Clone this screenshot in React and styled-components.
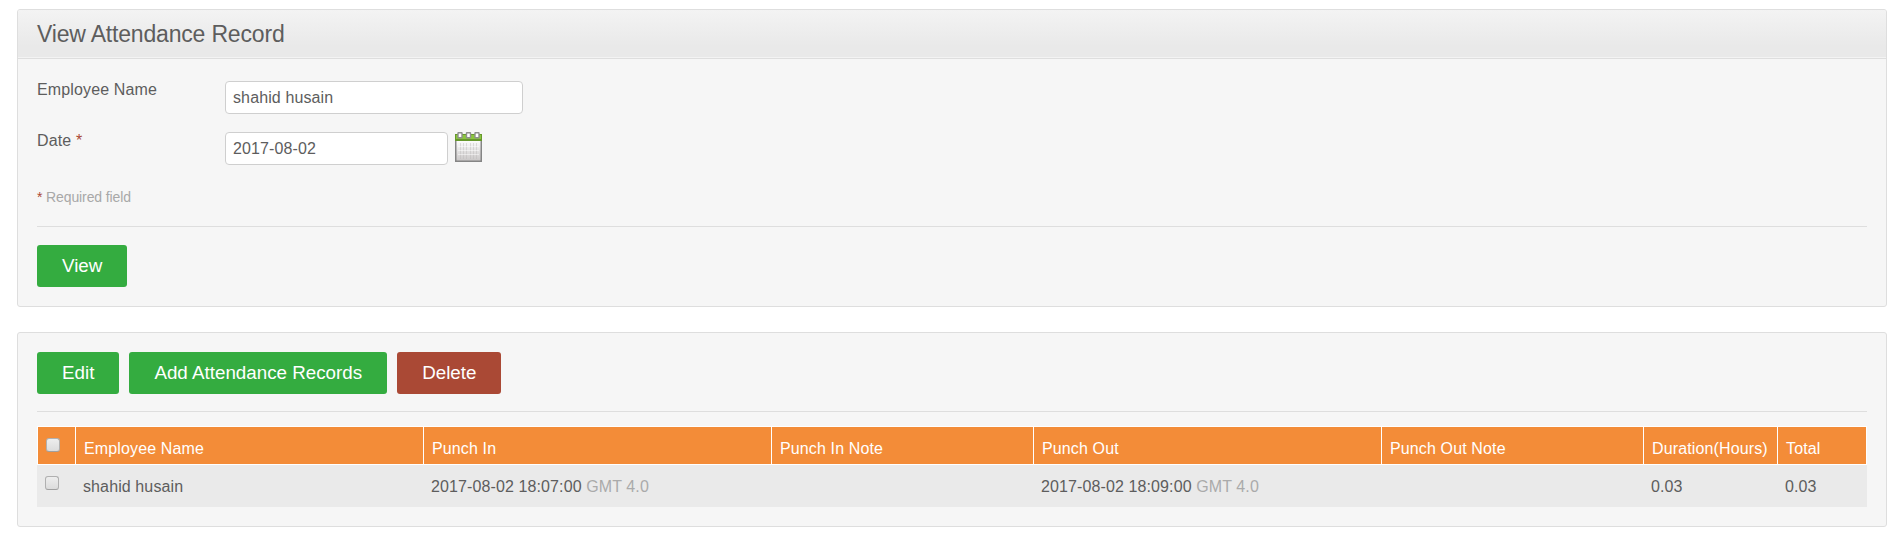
import React from "react";
import styled, { createGlobalStyle } from "styled-components";

const GlobalStyle = createGlobalStyle`
  * { box-sizing: border-box; }
  body { margin: 0; background: #fff; color: #5d5d5d; font: 16px/20px "Liberation Sans", Arial, sans-serif; }
`;
const Page = styled.main`
  width: 1887px;
  padding: 9px 0 0 17px;
  display: flex;
  flex-direction: column;
  gap: 25px;
`;
const Panel = styled.section`
  border: 1px solid #dedede;
  border-radius: 3px;
  background: #f6f6f6;
  overflow: hidden;
`;
const PanelHeader = styled.header`
  height: 49px;
  padding: 0 19px;
  border-bottom: 1px solid #dedede;
  box-shadow: inset 0 -1px 0 #f3f3f3;
  background: linear-gradient(#f3f3f3, #e9e9e9 75%);
`;
const Title = styled.h1`
  margin: 0;
  font-size: 23px;
  letter-spacing: -0.18px;
  line-height: 48px;
  font-weight: 400;
`;
const PanelBody = styled.div`
  padding: ${(p) => p.$top}px 19px 19px;
`;
const Field = styled.div`
  display: flex;
  align-items: flex-start;
  height: 33px;
  margin-bottom: 18px;
`;
const Label = styled.label`
  width: 188px;
  line-height: 18px;
  letter-spacing: 0.14px;
`;
const Input = styled.input`
  width: ${(p) => p.$width}px;
  height: 33px;
  padding: 0 7px;
  border: 1px solid #cfcfcf;
  border-radius: 4px;
  background: #fff;
  color: #5d5d5d;
  font: inherit;
  letter-spacing: 0.12px;
`;
const Calendar = styled.svg`
  display: block;
  margin-left: 7px;
`;
const Star = styled.span`
  color: #aa4935;
`;
const Hint = styled.p`
  margin: 0;
  padding-top: 4px;
  height: 43px;
  font-size: 14px;
  letter-spacing: -0.12px;
  color: #a8a8a8;
`;
const Actions = styled.div`
  display: flex;
  gap: 10px;
  ${(p) => p.$ruled && "border-top: 1px solid #dedede; padding-top: 18px;"}
`;
const Button = styled.button`
  height: 42px;
  padding: 0 25px 1px;
  border: 0;
  border-radius: 3px;
  background: ${(p) => (p.$danger ? "#aa4935" : "#34ac40")};
  color: #fff;
  font: 18.8px "Liberation Sans", Arial, sans-serif;
`;
const Divider = styled.hr`
  margin: 17px 0 14px;
  border: 0;
  height: 1px;
  background: #dedede;
`;
const Table = styled.table`
  width: 1830px;
  table-layout: fixed;
  border-collapse: separate;
  border-spacing: 0;
`;
const Th = styled.th`
  height: 39px;
  padding: 6px 0 0 8px;
  border: solid #fff;
  border-width: 1px 0 1px 1px;
  background: #f38c38;
  color: #fff;
  font-weight: 400;
  text-align: left;
  letter-spacing: 0.13px;
  &:last-child { border-right-width: 1px; }
`;
const Td = styled.td`
  height: 42px;
  padding: 1px 0 0 8px;
  background: #eaeaea;
  letter-spacing: 0.11px;
`;
const Check = styled.input`
  appearance: none;
  display: block;
  width: 14px;
  height: 14px;
  margin: -7px 0 0 0;
  border: 1px solid #b0b0b0;
  border-bottom-color: #a0a0a0;
  border-radius: 3px;
  background: linear-gradient(#eeeeee, #dcdcdc);
`;
const Zone = styled.span`
  color: #aaa;
`;

const columns = [
  ["Employee Name", 348],
  ["Punch In", 348],
  ["Punch In Note", 262],
  ["Punch Out", 348],
  ["Punch Out Note", 262],
  ["Duration(Hours)", 134],
  ["Total", 90],
];

function CalendarIcon() {
  return (
    <Calendar width="28" height="31" viewBox="0 0 28 31">
      <defs>
        <linearGradient id="page" x1="0" y1="0" x2="0" y2="1">
          <stop offset="0" stopColor="#fff" />
          <stop offset="1" stopColor="#c9c6c6" />
        </linearGradient>
      </defs>
      <rect x="0.75" y="7.75" width="25.5" height="21.5" fill="url(#page)" stroke="#858585" strokeWidth="1.5" />
      <path d="M5.5 11v16M8.5 11v16M11.5 11v16M15.5 11v16M18.5 11v16M21.5 11v16" stroke="#b9b6b6" opacity="0.4" />
      <path d="M3 14.5h21M3 18.5h21M3 22.5h21" stroke="#fff" opacity="0.5" />
      <rect x="0" y="2" width="27" height="7" fill="#66982c" />
      <rect x="1" y="3" width="25" height="4" fill="#8bc53f" />
      {[3, 11.5, 20].map((x) => (
        <rect key={x} x={x} y="0.7" width="4" height="5" rx="0.4" fill="#fff" stroke="#8f8f8f" strokeWidth="1.4" />
      ))}
    </Calendar>
  );
}

export default function App() {
  return (
    <>
      <GlobalStyle />
      <Page>
        <Panel>
          <PanelHeader><Title>View Attendance Record</Title></PanelHeader>
          <PanelBody $top={22}>
            <Field>
              <Label>Employee Name</Label>
              <Input $width={298} defaultValue="shahid husain" />
            </Field>
            <Field>
              <Label>Date <Star>*</Star></Label>
              <Input $width={223} defaultValue="2017-08-02" />
              <CalendarIcon />
            </Field>
            <Hint><Star>*</Star> Required field</Hint>
            <Actions $ruled><Button>View</Button></Actions>
          </PanelBody>
        </Panel>
        <Panel>
          <PanelBody $top={19}>
            <Actions>
              <Button>Edit</Button>
              <Button>Add Attendance Records</Button>
              <Button $danger>Delete</Button>
            </Actions>
            <Divider />
            <Table>
              <colgroup>
                <col width="38" />
                {columns.map(([name, width]) => <col key={name} width={width} />)}
              </colgroup>
              <thead>
                <tr>
                  <Th><Check type="checkbox" /></Th>
                  {columns.map(([name]) => <Th key={name}>{name}</Th>)}
                </tr>
              </thead>
              <tbody>
                <tr>
                  <Td><Check type="checkbox" /></Td>
                  <Td>shahid husain</Td>
                  <Td>2017-08-02 18:07:00 <Zone>GMT 4.0</Zone></Td>
                  <Td />
                  <Td>2017-08-02 18:09:00 <Zone>GMT 4.0</Zone></Td>
                  <Td />
                  <Td>0.03</Td>
                  <Td>0.03</Td>
                </tr>
              </tbody>
            </Table>
          </PanelBody>
        </Panel>
      </Page>
    </>
  );
}
